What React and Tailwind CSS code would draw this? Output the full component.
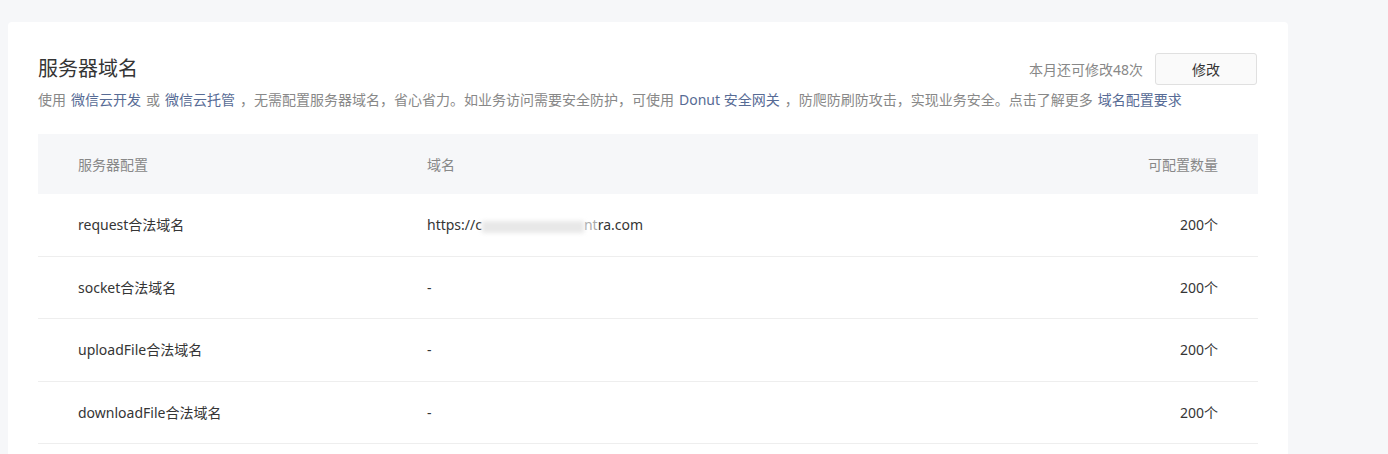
import React from "react";

const rows = [
  { name: "request合法域名", domain: "url", count: "200个" },
  { name: "socket合法域名", domain: "-", count: "200个" },
  { name: "uploadFile合法域名", domain: "-", count: "200个" },
  { name: "downloadFile合法域名", domain: "-", count: "200个" },
];

function Link({ children }) {
  return <a className="text-[#576b95] mx-[5px] cursor-pointer">{children}</a>;
}

export default function App() {
  return (
    <div
      className="h-[454px] overflow-hidden bg-[#f6f7f9] pt-[22px] pl-[8px]"
      style={{ fontFamily: '"Noto Sans", "Noto Sans CJK SC", sans-serif' }}
    >
      <div className="w-[1280px] h-[500px] bg-white rounded-t-[4px] px-[30px] pt-[31px]">
        <div className="flex items-center justify-between h-[32px]">
          <h2 className="text-[20px] leading-[30px] text-[#353535] font-normal">服务器域名</h2>
          <div className="flex items-center mr-[1px]">
            <span className="text-[14px] text-[#888] mr-[12px] whitespace-nowrap">本月还可修改48次</span>
            <button className="w-[102px] h-[32px] border border-[#e0e0e0] bg-[#fafafa] rounded-[3px] text-[14px] text-[#353535]">
              修改
            </button>
          </div>
        </div>
        <p className="mt-[5px] text-[14px] leading-[20px] text-[#888] whitespace-nowrap">
          使用<Link>微信云开发</Link>或<Link>微信云托管</Link>，无需配置服务器域名，省心省力。如业务访问需要安全防护，可使用<Link>Donut 安全网关</Link>，防爬防刷防攻击，实现业务安全。点击了解更多<Link>域名配置要求</Link>
        </p>

        <div className="mt-[24px] w-[1220px] text-[14px]">
          <div className="flex items-center h-[60px] bg-[#f6f7f9] px-[40px] text-[#888]">
            <div className="w-[349px]">服务器配置</div>
            <div className="flex-1">域名</div>
            <div className="text-right">可配置数量</div>
          </div>
          {rows.map((r) => (
            <div
              key={r.name}
              className="flex items-center h-[62.5px] px-[40px] border-b border-[#eeeeee] text-[#353535]"
            >
              <div className="w-[349px]">{r.name}</div>
              <div className="flex-1">
                {r.domain === "url" ? (
                  <span>
                    https://c
                    <span className="inline-block align-middle w-[102px] h-[12px] bg-[#e8e8e8] blur-[2px]"></span>
                    <span className="text-[#aaa]">nt</span>ra.com
                  </span>
                ) : (
                  r.domain
                )}
              </div>
              <div className="text-right">{r.count}</div>
            </div>
          ))}
        </div>
      </div>
    </div>
  );
}
